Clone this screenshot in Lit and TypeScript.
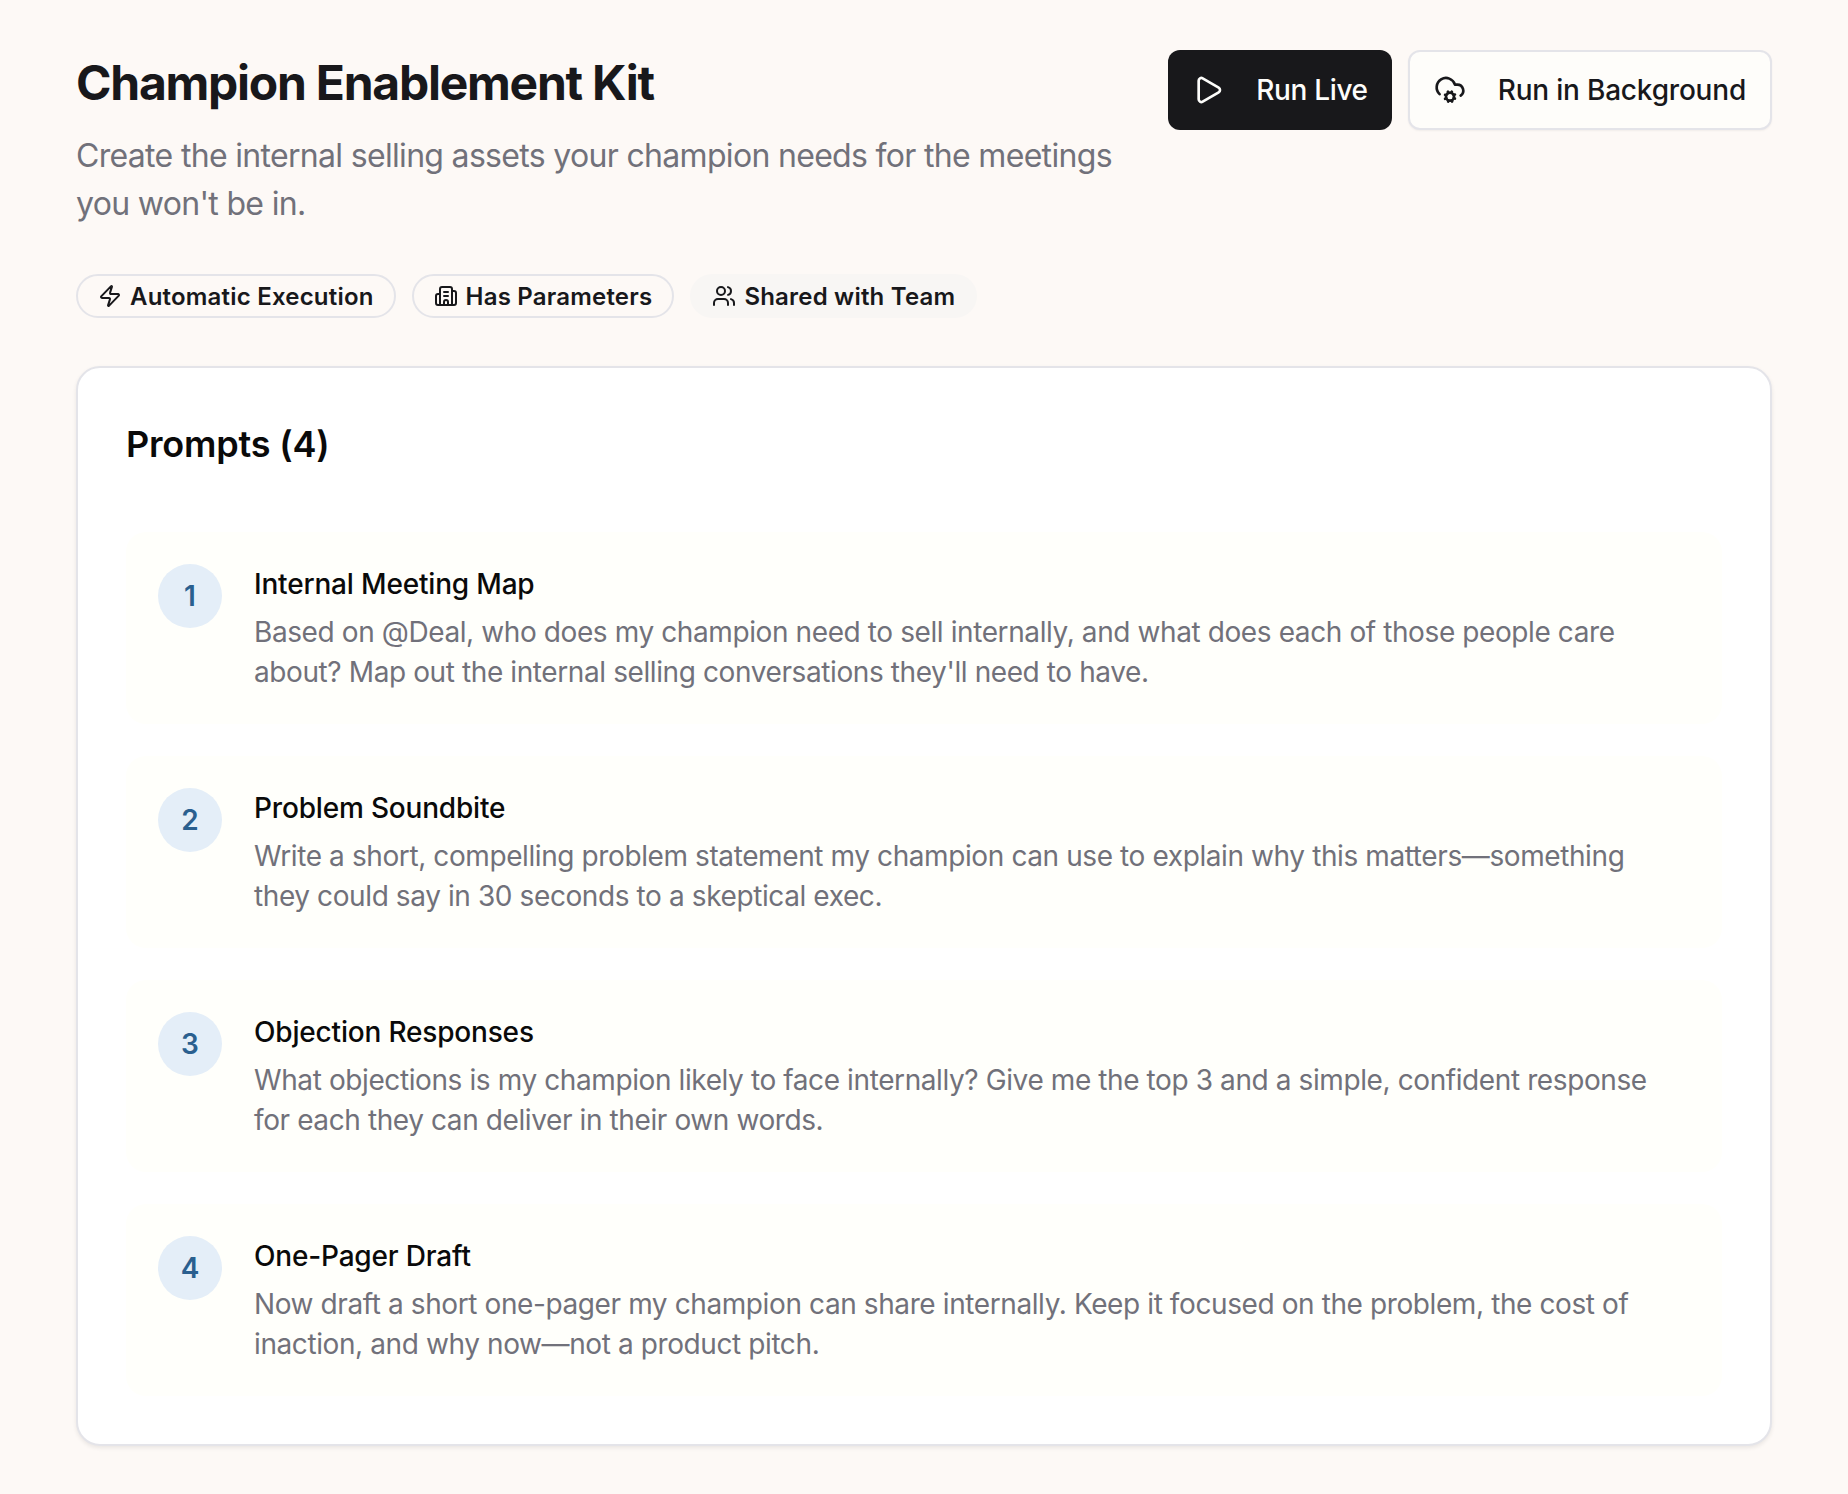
import { LitElement, css, html, svg } from "lit";
import { customElement } from "lit/decorators.js";

const PROMPTS = [
  {
    title: "Internal Meeting Map",
    text: "Based on @Deal, who does my champion need to sell internally, and what does each of those people care about? Map out the internal selling conversations they'll need to have.",
  },
  {
    title: "Problem Soundbite",
    text: "Write a short, compelling problem statement my champion can use to explain why this matters—something they could say in 30 seconds to a skeptical exec.",
  },
  {
    title: "Objection Responses",
    text: "What objections is my champion likely to face internally? Give me the top 3 and a simple, confident response for each they can deliver in their own words.",
  },
  {
    title: "One-Pager Draft",
    text: "Now draft a short one-pager my champion can share internally. Keep it focused on the problem, the cost of inaction, and why now—not a product pitch.",
  },
];

const icon = (cls: string, body: unknown) => html`
  <svg class=${cls} viewBox="0 0 24 24" fill="none" stroke="currentColor" stroke-width="2" stroke-linecap="round" stroke-linejoin="round" aria-hidden="true">${body}</svg>
`;

const playIcon = svg`<path d="M5 5a2 2 0 0 1 3.008-1.728l11.997 6.998a2 2 0 0 1 .003 3.458l-12 7A2 2 0 0 1 5 19z"></path>`;
const cloudCogIcon = svg`
  <circle cx="12" cy="17" r="3"></circle>
  <path d="M4.2 15.1A7 7 0 1 1 15.71 8h1.79a4.5 4.5 0 0 1 2.5 8.2"></path>
  <path d="m15.7 18.4-.9-.3"></path><path d="m9.2 15.9-.9-.3"></path>
  <path d="m10.6 20.7.3-.9"></path><path d="m13.1 14.2.3-.9"></path>
  <path d="m13.6 20.7-.4-1"></path><path d="m10.8 14.3-.4-1"></path>
  <path d="m8.3 18.6 1-.4"></path><path d="m14.7 15.8 1-.4"></path>
`;
const zapIcon = svg`<path d="M4 14a1 1 0 0 1-.78-1.63l9.9-10.2a.5.5 0 0 1 .86.46l-1.92 6.02A1 1 0 0 0 13 10h7a1 1 0 0 1 .78 1.63l-9.9 10.2a.5.5 0 0 1-.86-.46l1.92-6.02A1 1 0 0 0 11 14z"></path>`;
const buildingIcon = svg`
  <path d="M10 12h4"></path><path d="M10 8h4"></path>
  <path d="M14 21v-3a2 2 0 0 0-4 0v3"></path>
  <path d="M6 10H4a2 2 0 0 0-2 2v7a2 2 0 0 0 2 2h16a2 2 0 0 0 2-2V9a2 2 0 0 0-2-2h-2"></path>
  <path d="M6 21V5a2 2 0 0 1 2-2h8a2 2 0 0 1 2 2v16"></path>
`;
const usersIcon = svg`
  <path d="M16 21v-2a4 4 0 0 0-4-4H6a4 4 0 0 0-4 4v2"></path>
  <path d="M16 3.128a4 4 0 0 1 0 7.744"></path>
  <path d="M22 21v-2a4 4 0 0 0-3-3.87"></path>
  <circle cx="9" cy="7" r="4"></circle>
`;

@customElement("app-root")
export class AppRoot extends LitElement {
  protected override render() {
    return html`
      <div class="page">
        <header class="header">
          <div class="intro">
            <h1>Champion Enablement Kit</h1>
            <p>Create the internal selling assets your champion needs for the meetings you won't be in.</p>
          </div>
          <div class="actions">
            <button class="btn primary">${icon("btn-icon", playIcon)}Run Live</button>
            <button class="btn secondary">${icon("btn-icon", cloudCogIcon)}Run in Background</button>
          </div>
        </header>
        <div class="pills">
          <span class="pill">${icon("pill-icon", zapIcon)}Automatic Execution</span>
          <span class="pill">${icon("pill-icon", buildingIcon)}Has Parameters</span>
          <span class="pill filled">${icon("pill-icon", usersIcon)}Shared with Team</span>
        </div>
        <section class="card">
          <h2>Prompts (${PROMPTS.length})</h2>
          <div class="list">
            ${PROMPTS.map(
              (prompt, index) => html`
                <div class="item">
                  <div class="num">${index + 1}</div>
                  <div class="body">
                    <div class="title">${prompt.title}</div>
                    <div class="text">${prompt.text}</div>
                  </div>
                </div>
              `,
            )}
          </div>
        </section>
      </div>
    `;
  }

  public static override styles = css`
    :host {
      display: block;
      min-height: 1494px;
      background: #fdf9f6;
      font-family: Inter, "Liberation Sans", sans-serif;
      color: #18181b;
    }

    .page {
      box-sizing: border-box;
      padding: 48px 76px;
    }

    .header {
      display: flex;
      justify-content: space-between;
      gap: 32px;
    }

    .intro {
      flex: 1;
      min-width: 0;
    }

    h1 {
      margin: 0;
      font-size: 48px;
      line-height: 70px;
      font-weight: 700;
      letter-spacing: -1.25px;
    }

    .intro p {
      margin: 14px 0 0;
      font-size: 32px;
      line-height: 48px;
      letter-spacing: -0.68px;
      color: #71717a;
    }

    .actions {
      display: flex;
      flex: none;
      gap: 16px;
      padding-top: 2px;
      align-items: flex-start;
    }

    .btn {
      box-sizing: border-box;
      display: flex;
      align-items: center;
      gap: 32px;
      height: 80px;
      padding: 0 24px;
      border-radius: 12px;
      font: 500 28px Inter, "Liberation Sans", sans-serif;
      letter-spacing: -0.2px;
    }

    .btn-icon {
      width: 32px;
      height: 32px;
      flex: none;
    }

    .primary {
      background: #18181b;
      border: none;
      color: #fdfdfb;
      letter-spacing: -0.35px;
    }

    .secondary {
      background: #fefdfa;
      border: 2px solid #e4e4e9;
      color: #18181b;
      box-shadow: 0 1px 2px rgba(0, 0, 0, 0.05);
    }

    .pills {
      display: flex;
      gap: 16px;
      margin-top: 46px;
    }

    .pill {
      box-sizing: border-box;
      display: flex;
      align-items: center;
      gap: 8px;
      height: 44px;
      padding: 0 20px;
      border: 2px solid #e4e4e9;
      border-radius: 22px;
      font-size: 24px;
      font-weight: 600;
      letter-spacing: 0.2px;
      white-space: nowrap;
    }

    .pill.filled {
      background: #f8f6f4;
      border-color: transparent;
    }

    .pill-icon {
      width: 24px;
      height: 24px;
      flex: none;
    }

    .card {
      margin-top: 48px;
      padding: 48px;
      background: #ffffff;
      border: 2px solid #e4e4e9;
      border-radius: 24px;
      box-shadow: 0 2px 4px rgba(0, 0, 0, 0.08);
    }

    h2 {
      margin: 0 0 60px;
      font-size: 36px;
      line-height: 56px;
      font-weight: 600;
      letter-spacing: -0.2px;
      color: #0a0a0a;
    }

    .list {
      display: flex;
      flex-direction: column;
      gap: 32px;
    }

    .item {
      display: flex;
      gap: 32px;
      padding: 32px;
      background: #fffffb;
      border-radius: 20px;
    }

    .num {
      display: flex;
      flex: none;
      align-items: center;
      justify-content: center;
      width: 64px;
      height: 64px;
      border-radius: 50%;
      background: #e4eef8;
      color: #2a5f8f;
      font-size: 28px;
      font-weight: 600;
    }

    .body {
      flex: 1;
      min-width: 0;
      padding-right: 22px;
    }

    .title {
      font-size: 28px;
      line-height: 40px;
      font-weight: 500;
      letter-spacing: -0.18px;
      color: #0a0a0a;
    }

    .text {
      margin-top: 8px;
      font-size: 28px;
      line-height: 40px;
      letter-spacing: -0.4px;
      color: #71717a;
    }
  `;
}

declare global {
  interface HTMLElementTagNameMap {
    "app-root": AppRoot;
  }
}
